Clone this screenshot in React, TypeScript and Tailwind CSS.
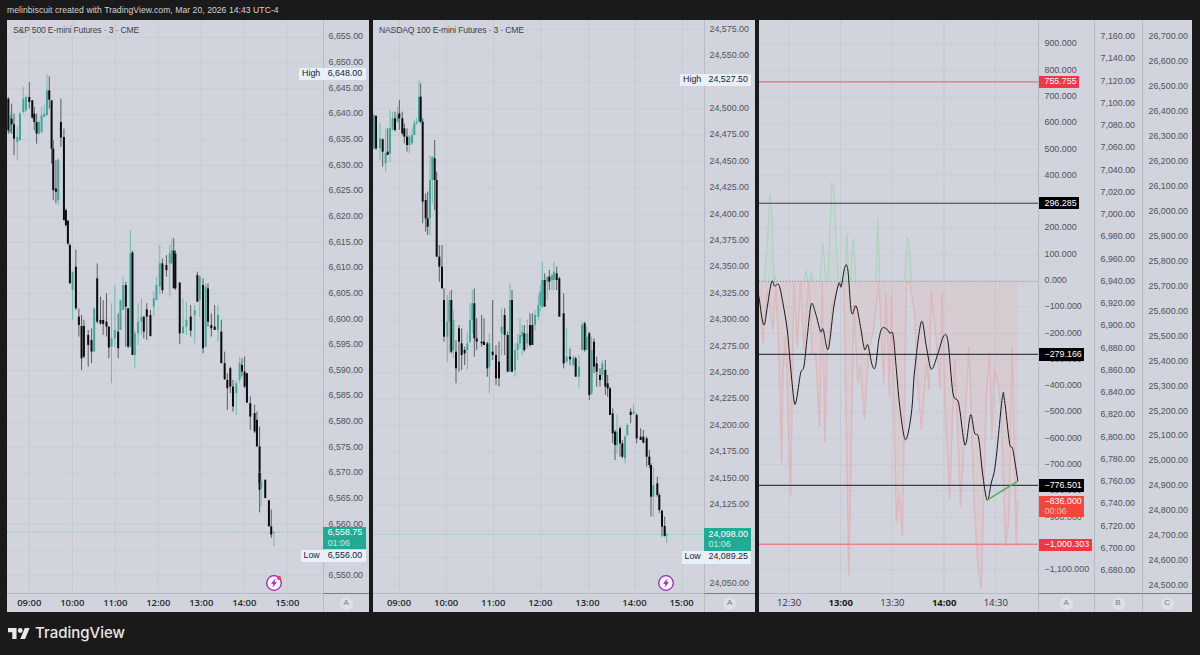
import type { ReactNode } from 'react'

type Candle = [number, number, number, number, number, number]

// rows are read at 3x, x / y get scaled back to page pixels here
const at3x = (ox: number, oy: number, rows: number[][]): Candle[] =>
  rows.map((r) => [ox + r[0] / 3, oy + r[1] / 3, oy + r[2] / 3, oy + r[3] / 3, oy + r[4] / 3, r[5]] as Candle)

const spCandles: Candle[] = [
  ...at3x(0, 0, [
    [25, 290, 400, 295, 390, 0], [30, 330, 400, 345, 395, 1], [35, 310, 400, 355, 372, 0], [42, 340, 465, 372, 415, 0],
    [52, 380, 480, 410, 425, 1], [60, 335, 420, 340, 420, 1], [70, 260, 340, 295, 335, 1], [78, 285, 335, 290, 330, 1],
    [88, 245, 325, 290, 305, 0], [97, 300, 355, 300, 352, 0], [103, 320, 390, 340, 365, 0], [110, 340, 430, 365, 400, 0],
    [117, 360, 405, 365, 400, 1], [125, 320, 400, 345, 395, 1], [133, 315, 350, 340, 350, 1], [141, 220, 345, 270, 345, 1],
    [148, 228, 325, 270, 298, 0], [155, 300, 490, 300, 445, 0], [160, 420, 600, 445, 570, 0], [168, 480, 610, 565, 575, 0],
    [175, 475, 615, 478, 600, 1], [183, 295, 440, 365, 412, 0], [192, 385, 660, 410, 660, 0],
  ]),
  ...at3x(0, 220, [
    [198, -35, 20, -30, 15, 0], [204, 0, 75, 2, 70, 0], [210, 70, 190, 75, 190, 0], [218, 155, 300, 155, 210, 1],
    [228, 88, 270, 140, 265, 0], [237, 265, 350, 290, 315, 0], [245, 285, 450, 318, 415, 0], [252, 300, 415, 318, 410, 0],
    [265, 330, 440, 345, 375, 0], [275, 325, 430, 360, 395, 0], [283, 265, 395, 265, 395, 1], [292, 130, 310, 175, 305, 0],
    [302, 230, 315, 300, 310, 0], [310, 240, 345, 300, 312, 0], [320, 220, 350, 305, 320, 0], [327, 320, 415, 320, 383, 0],
    [335, 250, 490, 355, 380, 1], [345, 195, 380, 330, 355, 1], [355, 280, 415, 335, 385, 0], [362, 240, 330, 240, 330, 1],
    [370, 170, 270, 195, 270, 1], [378, 185, 380, 195, 260, 0], [385, 265, 385, 265, 380, 0], [392, 30, 380, 100, 380, 1],
    [398, 92, 405, 97, 405, 0], [405, 330, 445, 340, 405, 1], [415, 250, 375, 305, 340, 1], [425, 235, 345, 290, 305, 1],
    [432, 290, 355, 290, 335, 0], [441, 250, 360, 268, 290, 0], [452, 270, 350, 285, 348, 0], [462, 215, 290, 235, 260, 1],
    [470, 170, 240, 195, 240, 1], [480, 75, 225, 130, 200, 1], [488, 115, 220, 130, 210, 0], [500, 105, 170, 135, 150, 0],
    [510, 75, 230, 100, 130, 1], [516, 55, 130, 90, 130, 1], [522, 55, 130, 92, 205, 0], [527, 90, 210, 100, 205, 0],
    [540, 185, 372, 188, 340, 0], [550, 235, 340, 320, 340, 1], [560, 245, 345, 300, 320, 1], [573, 255, 350, 290, 332, 0],
    [585, 255, 370, 270, 285, 1], [593, 155, 245, 165, 245, 0], [600, 165, 290, 170, 240, 1], [610, 175, 400, 195, 385, 0],
    [618, 190, 380, 200, 380, 1], [625, 190, 320, 205, 305, 0], [635, 280, 350, 315, 325, 0], [645, 255, 330, 320, 330, 0],
    [655, 255, 365, 285, 330, 1], [665, 300, 430, 335, 430, 0], [675, 395, 480, 430, 478, 0], [683, 460, 570, 480, 505, 0],
    [692, 440, 520, 445, 500, 0], [700, 480, 575, 500, 560, 0], [710, 480, 585, 490, 520, 1], [720, 410, 490, 430, 480, 1],
    [727, 415, 470, 435, 455, 0], [735, 410, 505, 455, 500, 0], [742, 460, 550, 460, 548, 0], [752, 530, 630, 550, 590, 0],
    [765, 555, 640, 580, 635, 0], [772, 575, 680, 600, 680, 0], [780, 620, 800, 680, 790, 0],
  ]),
  ...at3x(0, 480, [
    [780, -25, 98, -20, 30, 0], [785, -15, 80, 5, 25, 1], [797, 0, 55, 0, 55, 0], [808, 60, 140, 62, 140, 0],
    [815, 90, 175, 140, 165, 0], [823, 155, 200, 157, 160, 1],
  ]),
]

const nqCandles: Candle[] = [
  ...at3x(370, 60, [
    [12, 160, 270, 165, 265, 1], [18, 165, 270, 168, 265, 0], [30, 190, 300, 235, 265, 1], [38, 235, 320, 238, 275, 0],
    [47, 205, 335, 280, 310, 1], [53, 205, 285, 275, 285, 0], [60, 150, 305, 205, 280, 1], [68, 155, 210, 175, 210, 1],
    [75, 155, 215, 175, 210, 0], [83, 140, 190, 165, 185, 1], [88, 120, 210, 160, 175, 0], [97, 155, 225, 175, 220, 0],
    [103, 190, 250, 205, 230, 0], [111, 205, 275, 230, 255, 0], [118, 225, 280, 230, 255, 1], [126, 205, 255, 225, 250, 1],
    [133, 180, 225, 190, 225, 1], [140, 175, 195, 185, 190, 1], [147, 60, 185, 110, 185, 1], [152, 70, 190, 110, 185, 0],
    [158, 175, 490, 185, 425, 0], [167, 400, 515, 420, 475, 0], [173, 395, 525, 475, 500, 0], [180, 285, 525, 360, 475, 1],
    [187, 290, 430, 290, 360, 1], [194, 240, 450, 295, 360, 0], [200, 335, 590, 360, 590, 0], [208, 555, 665, 590, 620, 0],
    [216, 555, 685, 620, 685, 0], [517, 605, 745, 660, 740, 1], [524, 640, 740, 660, 740, 0], [532, 650, 720, 650, 665, 1],
    [538, 630, 690, 650, 665, 0], [546, 640, 690, 645, 660, 1], [552, 605, 690, 635, 660, 1], [560, 620, 690, 640, 660, 0],
    [568, 650, 765, 655, 770, 0],
  ]),
  ...at3x(370, 300, [
    [222, -35, 125, 0, 110, 0], [232, -15, 185, 65, 110, 1], [238, -25, 160, 0, 65, 1], [244, -30, 160, 0, 155, 0],
    [250, 30, 175, 60, 150, 1], [258, 120, 250, 155, 205, 0], [267, 75, 215, 85, 125, 0], [275, 85, 210, 130, 165, 0],
    [284, 140, 195, 150, 160, 0], [292, 95, 210, 130, 150, 1], [300, 10, 130, 60, 125, 1], [307, -30, 100, 10, 60, 1],
    [313, -35, 170, 10, 115, 0], [320, 55, 150, 115, 125, 0], [335, 45, 140, 125, 130, 0], [342, 55, 135, 125, 135, 0],
    [352, 125, 230, 130, 205, 0], [358, 100, 280, 130, 200, 1], [368, 0, 180, 155, 165, 0], [378, 135, 255, 165, 235, 0],
    [387, 125, 260, 185, 235, 0], [395, 25, 165, 80, 100, 1], [404, 25, 165, 45, 105, 0], [413, 95, 215, 105, 215, 0],
    [420, -50, 215, 0, 215, 1], [426, -30, 215, 0, 215, 0], [435, 130, 230, 150, 210, 1], [443, 100, 180, 130, 150, 1],
    [450, 55, 145, 105, 130, 1], [457, 75, 165, 95, 110, 1], [463, 75, 155, 100, 150, 0], [472, 60, 145, 100, 130, 1],
    [480, 40, 140, 75, 135, 0], [487, 40, 135, 75, 135, 0], [495, 30, 90, 45, 75, 1], [505, -15, 60, 15, 50, 1],
    [511, -45, 35, -25, 15, 1], [581, -20, 205, 40, 190, 0], [590, 85, 190, 170, 185, 1], [600, 145, 195, 170, 178, 0],
    [610, 165, 200, 172, 195, 1], [617, 170, 230, 175, 230, 0], [627, 165, 265, 200, 230, 1], [636, 65, 150, 75, 150, 1],
    [644, 65, 155, 70, 150, 0], [650, 80, 150, 110, 150, 1], [658, 95, 300, 100, 285, 0], [665, 110, 285, 150, 280, 1],
    [672, 115, 220, 125, 200, 0], [680, 170, 260, 190, 215, 0], [690, 205, 260, 225, 240, 0], [697, 180, 240, 190, 225, 1],
    [706, 180, 285, 210, 260, 0], [713, 225, 290, 250, 265, 0], [720, 260, 345, 265, 345, 0], [728, 325, 430, 340, 400, 0],
    [735, 390, 480, 395, 435, 0], [741, 345, 460, 395, 435, 1], [750, 380, 470, 385, 430, 0], [757, 420, 475, 430, 470, 0],
    [765, 405, 490, 410, 475, 1], [772, 370, 410, 375, 405, 1], [782, 325, 370, 335, 345, 0], [791, 310, 345, 335, 342, 1],
    [800, 340, 430, 345, 415, 0], [812, 385, 420, 410, 420, 0], [820, 390, 430, 410, 428, 0], [830, 410, 500, 415, 470, 0],
    [838, 450, 505, 470, 495, 0], [843, 490, 650, 495, 590, 0], [850, 500, 650, 555, 590, 1], [862, 530, 590, 550, 585, 0],
    [868, 580, 640, 585, 630, 0], [876, 630, 710, 632, 680, 0], [884, 650, 710, 678, 708, 0], [890, 700, 730, 703, 706, 1],
  ]),
]

const pink: number[][] = [
  ...[
    [0, 60], [12, 220], [25, 60], [42, 180], [50, 40], [60, 250], [68, 580], [72, 300], [80, 200], [95, 680], [105, 40],
    [115, 230], [125, 33], [135, 240], [150, 33], [160, 250], [170, 250], [182, 470], [190, 33], [198, 520], [205, 240],
    [222, 100], [240, 33], [255, 33], [270, 920], [285, 100], [297, 340], [305, 290], [317, 450], [330, 240], [345, 180],
    [360, 33], [375, 340], [382, 70], [392, 380],
  ].map(([x, y]) => [759 + x / 3, 270 + y / 3]),
  ...[
    [5, 80], [20, 760], [28, 670], [38, 800], [50, 40], [60, 33], [75, 130], [82, 310], [95, 480], [110, 280], [118, 360],
    [125, 60], [130, 130], [137, 180], [152, 360], [157, 70], [165, 380], [180, 690], [195, 270], [213, 710], [238, 230],
    [255, 730], [265, 890], [275, 960], [290, 380], [300, 250], [307, 510], [315, 300], [325, 340], [335, 420], [348, 830],
    [358, 750], [368, 230], [380, 830], [385, 690],
  ].map(([x, y]) => [890 + x / 3, 270 + y / 3]),
]

const oscillator: number[][] = [
  ...[
    [0, 80], [10, 150], [17, 162], [25, 110], [38, 35], [47, 48], [60, 45], [72, 100], [85, 180], [93, 270], [105, 390],
    [112, 393], [125, 310], [135, 290], [145, 200], [157, 103], [170, 130], [185, 185], [193, 178], [208, 238], [225, 110],
    [240, 40], [247, 50], [258, -9], [267, 0], [278, 128], [292, 108], [305, 170], [317, 238], [327, 225], [340, 285],
    [350, 290], [360, 210], [370, 175], [385, 178],
  ].map(([x, y]) => [759 + x / 3, 270 + y / 3]),
  ...[
    [0, 190], [10, 195], [20, 300], [30, 410], [47, 510], [65, 430], [75, 300], [95, 155], [110, 230], [125, 298], [145, 250],
    [162, 198], [175, 215], [190, 370], [207, 400], [222, 510], [230, 518], [243, 435], [255, 490], [267, 505], [280, 620],
    [293, 692], [305, 640], [318, 580], [338, 385], [345, 392], [360, 520], [370, 540], [385, 635],
  ].map(([x, y]) => [890 + x / 3, 270 + y / 3]),
]

const greenSpikes = [
  'M764 282L767 250L770 193L772 215L774 280L775 276L777 282',
  'M804 282L806 270L808 282M810 282L811 272L813 282',
  'M820 282L823 242L826 282M828 282L830 230L832 183L834 187L837 257L839 282',
  'M845 282L847 233L849 282M851 282L852 250L854 238L856 282',
  'M876 282L878 218L880 282',
  'M905 282L907 238L909 240L912 282',
]

const smooth = (pts: number[][]) => {
  let d = `M${pts[0][0]} ${pts[0][1]}`
  for (let i = 0; i < pts.length - 1; i++) {
    const a = pts[Math.max(i - 1, 0)]
    const b = pts[i]
    const c = pts[i + 1]
    const e = pts[Math.min(i + 2, pts.length - 1)]
    d += `C${b[0] + (c[0] - a[0]) / 6} ${b[1] + (c[1] - a[1]) / 6} ${c[0] - (e[0] - b[0]) / 6} ${c[1] - (e[1] - b[1]) / 6} ${c[0]} ${c[1]}`
  }
  return d
}

const range = (start: number, step: number, n: number) => Array.from({ length: n }, (_, i) => start + i * step)

const Candles = ({ data }: { data: Candle[] }) => (
  <g>
    {data.map(([x, h, l, t, b, up], i) => (
      <g key={i}>
        <line x1={x} x2={x} y1={h} y2={l} stroke={up ? '#6fbdb2' : '#5b5d63'} strokeWidth="1" />
        <rect x={x - 1} y={t} width="2" height={Math.max(b - t, 1)} fill={up ? '#3fa89a' : '#0c0c0e'} />
      </g>
    ))}
  </g>
)

const Grid = ({ xs, ys, x1, x2 }: { xs: number[]; ys: number[]; x1: number; x2: number }) => (
  <g stroke="#c8cbd4" strokeWidth="1">
    {xs.map((x) => (
      <line key={x} x1={x} x2={x} y1="20" y2="593" />
    ))}
    {ys.map((y) => (
      <line key={y} x1={x1} x2={x2} y1={y} y2={y} strokeOpacity="0.75" />
    ))}
  </g>
)

const Bolt = ({ dot }: { dot?: boolean }) => (
  <svg viewBox="0 0 18 18" className="h-[18px] w-[18px]">
    <circle cx="9" cy="9" r="7.3" fill="#f4f1f8" stroke="#9c27b0" strokeWidth="1.3" />
    <path d="M10.6 4.6 6 9.8h2.6l-1.2 3.6 4.6-5.2H9.4z" fill="#9c27b0" />
    {dot && <circle cx="14" cy="4" r="2" fill="#f23645" />}
  </svg>
)

const Scale = ({ labels, className, rowClass }: { labels: string[]; className: string; rowClass: string }) => (
  <div className={`flex shrink-0 flex-col overflow-hidden border-l border-[#b8bbc5] ${className}`}>
    {labels.map((label, i) => (
      <div key={i} className={`flex shrink-0 items-center whitespace-nowrap ${rowClass}`}>
        {label}
      </div>
    ))}
  </div>
)

const Tag = ({ className, children }: { className: string; children: ReactNode }) => (
  <div className={`absolute flex items-center whitespace-nowrap ${className}`}>{children}</div>
)

const AxisBadge = ({ letter, className }: { letter: string; className: string }) => (
  <div className={`flex shrink-0 items-center justify-center border-l border-[#b8bbc5] border-t border-t-[#787b86] ${className}`}>
    <span className="flex h-[13px] w-[13px] items-center justify-center rounded-full bg-[#dde0e6] text-[8px] text-[#787b86]">
      {letter}
    </span>
  </div>
)

const TimeAxis = ({ times, className, cellClass }: { times: string[]; className: string; cellClass: string }) => (
  <div className={`flex min-w-0 flex-1 items-center border-t border-[#b8bbc5] text-[9.5px] text-[#26282f] [font-family:'Open_Sans',sans-serif] ${className}`}>
    {times.map((t) => (
      <div key={t} className={`shrink-0 text-center ${cellClass}`}>
        {t}
      </div>
    ))}
  </div>
)

const spLabels = [
  '6,655.00', '6,650.00', '6,645.00', '6,640.00', '6,635.00', '6,630.00', '6,625.00', '6,620.00', '6,615.00', '6,610.00',
  '6,605.00', '6,600.00', '6,595.00', '6,590.00', '6,585.00', '6,580.00', '6,575.00', '6,570.00', '6,565.00', '6,560.00',
  '', '6,550.00',
]
const nqLabels = [
  '24,575.00', '24,550.00', '', '24,500.00', '24,475.00', '24,450.00', '24,425.00', '24,400.00', '24,375.00', '24,350.00',
  '24,325.00', '24,300.00', '24,275.00', '24,250.00', '24,225.00', '24,200.00', '24,175.00', '24,150.00', '24,125.00', '',
  '', '24,050.00',
]
const aLabels = [
  '900.000', '800.000', '700.000', '600.000', '500.000', '400.000', '300.000', '200.000', '100.000', '0.000', '−100.000',
  '−200.000', '−300.000', '−400.000', '−500.000', '−600.000', '−700.000', '−800.000', '−900.000', '', '−1,100.000',
]
const bLabels = range(0, 1, 25).map((i) => {
  const v = 7160 - i * 20
  return `${Math.floor(v / 1000)},${String(v % 1000).padStart(3, '0')}.00`
})
const cLabels = range(0, 1, 23).map((i) => {
  const v = 26700 - i * 100
  return `${Math.floor(v / 1000)},${String(v % 1000).padStart(3, '0')}.00`
})

export default function App() {
  const pinkLine = pink.map((p) => `${p[0]},${Math.max(p[1], 281.5)}`).join(' ')
  const pinkArea = `759,281.5 ${pinkLine} 1018,281.5`

  return (
    <div className="flex h-[655px] w-[1200px] flex-col overflow-hidden bg-[#1a1a1a] [font-family:'Liberation_Sans',sans-serif]">
      <header className="flex h-5 shrink-0 items-center pl-[7px] text-[8.6px] tracking-[0.05px] text-[#d4d4d4]">
        melinbiscuit created with TradingView.com, Mar 20, 2026 14:43 UTC-4
      </header>

      <main className="flex h-[592px] shrink-0 gap-1 pl-[7px]">
        {/* S&P panel */}
        <section className="flex w-[362px] flex-col bg-[#d1d4dc]">
          <div className="relative flex h-[573px] overflow-hidden text-[8.9px] text-[#50535e]">
            <div className="relative min-w-0 flex-1">
              <svg viewBox="7 20 316 573" className="block h-full w-full">
                <Grid xs={[29.5, 72.5, 115.5, 158.5, 201.5, 244.5, 287.5]} ys={range(37, 25.67, 22)} x1={7} x2={323} />
                <line x1="7" x2="323" y1="532.5" y2="532.5" stroke="#7fc4ba" strokeDasharray="1 1.5" />
                <Candles data={spCandles} />
              </svg>
              <div className="absolute left-[6px] top-[4px] text-[8.6px] tracking-[-0.16px] text-[#3f424c]">S&amp;P 500 E-mini Futures · 3 · CME</div>
              <div className="absolute left-[258px] top-[553.5px]">
                <Bolt dot />
              </div>
            </div>
            <Scale labels={spLabels} className="w-[46.5px] pl-[5px] pt-[4.17px]" rowClass="h-[25.67px]" />
            <Tag className="left-[292px] top-[48px] h-[12px] w-[67px] bg-[#e8f1fb] text-[#1c2030]">
              <span className="w-[28.7px] shrink-0 pl-[3px]">High</span>
              <span>6,648.00</span>
            </Tag>
            <Tag className="left-[293.5px] top-[529.5px] h-[12px] w-[65.5px] bg-[#e8f1fb] text-[#1c2030]">
              <span className="w-[27.2px] shrink-0 pl-[3px]">Low</span>
              <span>6,556.00</span>
            </Tag>
            <div className="absolute left-[315.5px] top-[506.5px] flex h-[22px] w-[43.5px] flex-col justify-center bg-[#22ab94] pl-[5.2px] leading-[10.5px] text-white">
              <span>6,558.75</span>
              <span className="text-[#c6ece5]">01:06</span>
            </div>
          </div>
          <div className="flex h-[19px]">
            <TimeAxis
              times={['09:00', '10:00', '11:00', '12:00', '13:00', '14:00', '15:00']}
              className="pl-[0.8px] font-semibold"
              cellClass="w-[43px]"
            />
            <AxisBadge letter="A" className="w-[46.5px]" />
          </div>
        </section>

        {/* NQ panel */}
        <section className="flex w-[382px] flex-col bg-[#d1d4dc]">
          <div className="relative flex h-[573px] overflow-hidden text-[8.9px] text-[#50535e]">
            <div className="relative min-w-0 flex-1">
              <svg viewBox="373 20 330.5 573" className="block h-full w-full">
                <Grid xs={[399.5, 446.5, 493.5, 541, 588.5, 635.5, 682.5]} ys={range(29.6, 26.4, 22)} x1={373} x2={704} />
                <line x1="373" x2="704" y1="534.5" y2="534.5" stroke="#7fc4ba" strokeDasharray="1 1.5" />
                <Candles data={nqCandles} />
              </svg>
              <div className="absolute left-[6px] top-[4px] text-[8.6px] tracking-[-0.16px] text-[#3f424c]">NASDAQ 100 E-mini Futures · 3 · CME</div>
              <div className="absolute left-[284px] top-[553.5px]">
                <Bolt />
              </div>
            </div>
            <Scale labels={nqLabels} className="w-[51.5px] pl-[5px] [&>div:first-child]:-mt-[3.6px]" rowClass="h-[26.4px]" />
            <Tag className="left-[307px] top-[54px] h-[12px] w-[71px] bg-[#e8f1fb] text-[#1c2030]">
              <span className="w-[28.5px] shrink-0 pl-[3px]">High</span>
              <span>24,527.50</span>
            </Tag>
            <Tag className="left-[308.5px] top-[530.5px] h-[13px] w-[69.5px] bg-[#e8f1fb] text-[#1c2030]">
              <span className="w-[27px] shrink-0 pl-[3px]">Low</span>
              <span>24,089.25</span>
            </Tag>
            <div className="absolute left-[330.5px] top-[508.3px] flex h-[22.3px] w-[47.5px] flex-col justify-center bg-[#22ab94] pl-[5px] leading-[10.5px] text-white">
              <span>24,098.00</span>
              <span className="text-[#c6ece5]">01:06</span>
            </div>
          </div>
          <div className="flex h-[19px]">
            <TimeAxis
              times={['09:00', '10:00', '11:00', '12:00', '13:00', '14:00', '15:00']}
              className="pl-[2.5px] font-semibold"
              cellClass="w-[47.1px]"
            />
            <AxisBadge letter="A" className="w-[51.5px]" />
          </div>
        </section>

        {/* Spread panel */}
        <section className="flex w-[433px] flex-col bg-[#d1d4dc]">
          <div className="relative flex h-[573px] overflow-hidden text-[8.9px] text-[#50535e]">
            <div className="min-w-0 flex-1">
              <svg viewBox="759 20 279.5 573" className="block h-full w-full">
                <Grid xs={[789, 840.7, 892.3, 944.3, 995.8]} ys={range(44, 26.3, 21)} x1={759} x2={1039} />
                <polygon points={pinkArea} fill="#e7b4b4" fillOpacity="0.25" />
                <polyline points={pinkLine} fill="none" stroke="#e8a4a6" strokeOpacity="0.5" strokeWidth="1.5" />
                <path d={greenSpikes.join('')} fill="#b7d9c4" fillOpacity="0.25" stroke="#a9d4ba" strokeOpacity="0.85" strokeWidth="1.2" />
                <line x1="759" x2="1039" y1="281.5" y2="281.5" stroke="#8b8e97" strokeDasharray="1 2" />
                <line x1="759" x2="1039" y1="81.5" y2="81.5" stroke="#ec6a76" strokeWidth="1.1" />
                <line x1="759" x2="1039" y1="203" y2="203" stroke="#3d3f45" strokeWidth="1.1" />
                <line x1="759" x2="1039" y1="354.5" y2="354.5" stroke="#3d3f45" strokeWidth="1.1" />
                <line x1="759" x2="1039" y1="485.7" y2="485.7" stroke="#3d3f45" strokeWidth="1.1" />
                <line x1="759" x2="1039" y1="544.7" y2="544.7" stroke="#ec6a76" strokeWidth="1.1" />
                <path d={smooth(oscillator)} fill="none" stroke="#17181c" strokeWidth="1" />
                <line x1="987" x2="1018" y1="500.7" y2="481.7" stroke="#4caf50" strokeWidth="1.3" />
              </svg>
            </div>
            <Scale labels={aLabels} className="w-[55.5px] pl-[5.5px] pt-[10.85px]" rowClass="h-[26.3px]" />
            <Scale labels={bLabels} className="w-[48px] pl-[6px] pt-[5.57px]" rowClass="h-[22.26px]" />
            <Scale labels={cLabels} className="w-[50.5px] pl-[6px] pt-[4.2px]" rowClass="h-[24.97px]" />
            <Tag className="left-[279.5px] top-[56px] h-[12.3px] w-[40.7px] bg-[#f23645] pl-[6px] text-white">755.755</Tag>
            <Tag className="left-[279.5px] top-[177.3px] h-[12px] w-[40.7px] bg-black pl-[6px] text-white">296.285</Tag>
            <Tag className="left-[279.5px] top-[328.3px] h-[12.7px] w-[45px] bg-black pl-[6px] text-white">−279.166</Tag>
            <Tag className="left-[279.5px] top-[459.3px] h-[12.7px] w-[45px] bg-black pl-[6px] text-white">−776.501</Tag>
            <div className="absolute left-[279.5px] top-[475.7px] flex h-[21.6px] w-[45px] flex-col justify-center bg-[#f7453b] pl-[6px] leading-[10.5px] text-white">
              <span>−836.000</span>
              <span className="text-[#fbc4bf]">00:06</span>
            </div>
            <Tag className="left-[279.5px] top-[518.7px] h-[12px] w-[53.5px] bg-[#f23645] pl-[6px] text-white">−1,000.303</Tag>
          </div>
          <div className="flex h-[19px]">
            <div className="flex min-w-0 flex-1 items-center border-t border-[#b8bbc5] pl-[4.2px] text-[9.5px] text-[#33353d] [font-family:'Open_Sans',sans-serif]">
              <div className="w-[51.7px] shrink-0 text-center">12:30</div>
              <div className="w-[51.7px] shrink-0 text-center font-bold text-[#1a1c22]">13:00</div>
              <div className="w-[51.7px] shrink-0 text-center">13:30</div>
              <div className="w-[51.7px] shrink-0 text-center font-bold text-[#1a1c22]">14:00</div>
              <div className="w-[51.7px] shrink-0 text-center">14:30</div>
            </div>
            <AxisBadge letter="A" className="w-[55.5px]" />
            <AxisBadge letter="B" className="w-[48px]" />
            <AxisBadge letter="C" className="w-[50.5px]" />
          </div>
        </section>
      </main>

      <footer className="flex flex-1 items-center gap-[5px] pl-[8px] text-white">
        <svg viewBox="0 4 36 18" className="h-[11px] w-[22px]" fill="#e8e8e8">
          <path d="M14 22H7V11H0V4h14v18zM28 22h-8l7.5-18h8L28 22z" />
          <circle cx="20" cy="8" r="4" />
        </svg>
        <span className="text-[15px] font-medium text-[#e8e8e8] [font-family:'Inter',sans-serif]">TradingView</span>
      </footer>
    </div>
  )
}
